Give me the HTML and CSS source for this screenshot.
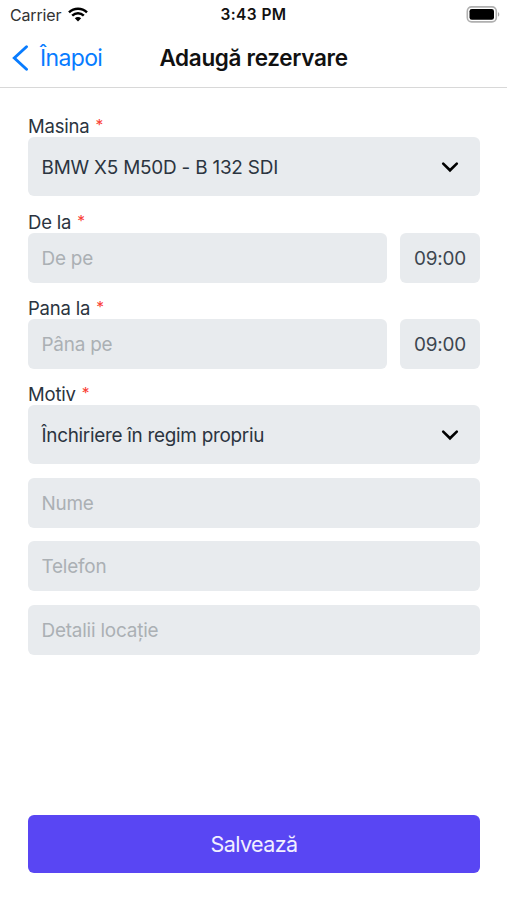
FILE: index.html
```html
<!DOCTYPE html>
<html lang="ro">
<head>
<meta charset="utf-8">
<title>Adaugă rezervare</title>
<link rel="stylesheet" href="styles.css">
</head>
<body>
<div class="screen">
  <header class="header">
    <div class="status">
      <div class="carrier"><span>Carrier</span>
        <svg class="wifi" width="20" height="15" viewBox="0 0 20 15"><g fill="none" stroke="#000" stroke-width="2.5"><path d="M1 5.3C6.2.4 13.800.4 19 5.300"/><path d="M4.200 8.700c3.400-3.200 8.200-3.200 11.600 0"/></g><path d="M6.800 11.200c1.900-1.700 4.500-1.700 6.400 0L10 14.500z"/></svg>
      </div>
      <span class="clock">3:43 PM</span>
      <svg class="battery" width="34" height="17" viewBox="0 0 34 17"><rect x="1.300" y=".9" width="29" height="15" rx="4.300" fill="#fff" stroke="#b0b0b0" stroke-width="1.600"/><rect x="3.500" y="3" width="24.500" height="10.800" rx="2.300"/><path d="M32 6.200c1.700.6 1.700 3.800 0 4.400z" fill="#aaa"/></svg>
    </div>
    <nav class="nav">
      <a class="back"><svg width="17" height="26" viewBox="0 0 17 26"><path d="M14.500 1.700L2.300 13l12.200 11.300" fill="none" stroke="#087cff" stroke-width="2.900" stroke-linecap="round" stroke-linejoin="miter"/></svg><span>Înapoi</span></a>
      <h1 class="title">Adaugă rezervare</h1>
    </nav>
  </header>
  <form class="form">
    <div class="group">
      <label class="label">Masina <i>*</i></label>
      <div class="field select"><span>BMW X5 M50D - B 132 SDI</span><svg width="18" height="12" viewBox="0 0 18 12"><path d="M2.200 2.600L9 9.300l6.800-6.700" fill="none" stroke="#000" stroke-width="2.600" stroke-linecap="round"/></svg></div>
    </div>
    <div class="group">
      <label class="label">De la <i>*</i></label>
      <div class="row"><input class="field" placeholder="De pe"><div class="field time">09:00</div></div>
    </div>
    <div class="group">
      <label class="label">Pana la <i>*</i></label>
      <div class="row"><input class="field" placeholder="Pâna pe"><div class="field time">09:00</div></div>
    </div>
    <div class="group">
      <label class="label">Motiv <i>*</i></label>
      <div class="field select"><span class="reason">Închiriere în regim propriu</span><svg width="18" height="12" viewBox="0 0 18 12"><path d="M2.200 2.600L9 9.300l6.800-6.700" fill="none" stroke="#000" stroke-width="2.600" stroke-linecap="round"/></svg></div>
    </div>
    <div class="extras">
      <input class="field" placeholder="Nume">
      <input class="field" placeholder="Telefon">
      <input class="field" placeholder="Detalii locație">
    </div>
    <button class="save" type="button">Salvează</button>
  </form>
</div>
</body>
</html>
```
FILE: styles.css
```css
* { box-sizing: border-box; }
body {
  margin: 0;
  background: #fff;
  font-family: Inter, "Liberation Sans", sans-serif;
  color: #2b3440;
}
.screen { height: 900px; display: flex; flex-direction: column; overflow: hidden; }
.header { height: 88px; border-bottom: 1.5px solid #d8d8d8; flex: none; }
.status {
  height: 29px;
  display: grid;
  grid-template-columns: 1fr auto 1fr;
  align-items: center;
  padding: 0 7px 0 10px;
  font-size: 16px;
}
.carrier { display: flex; align-items: center; gap: 7px; color: #333; letter-spacing: -.15px; }
.clock { font-weight: 600; color: #111; font-size: 15.5px; letter-spacing: .4px; margin-right: 3px; }
.battery { justify-self: end; }
.nav {
  height: 58px;
  display: grid;
  grid-template-columns: 1fr auto 1fr;
  align-items: center;
  padding: 0 12px;
}
.back { display: flex; align-items: center; gap: 11px; color: #087cff; font-size: 23px; letter-spacing: -.65px; }
.title { margin: 0; padding-bottom: 2px; font-size: 22.5px; font-weight: 600; color: #111; letter-spacing: -.32px; }
.form { flex: 1; display: flex; flex-direction: column; padding: 26.3px 27px 27px 28px; }
.group { margin-bottom: 13.35px; }
.label { display: block; height: 23px; line-height: 24px; font-size: 18.5px; letter-spacing: -.2px; }
.label i { margin-left: 1px; font-style: normal; font-size: 15.5px; line-height: 1; vertical-align: 2px; color: #fa3e35; }
.field {
  display: flex;
  align-items: center;
  width: 100%;
  min-width: 0;
  height: 50px;
  padding: 1px 13.5px 0;
  border: 0;
  border-radius: 6px;
  background: #e8ebee;
  color: #2b3440;
  font: 400 18.9px Inter, "Liberation Sans", sans-serif;
  letter-spacing: -.2px;
}
.field::placeholder { color: #abb0b4; opacity: 1; }
.select { height: 59px; justify-content: space-between; padding-right: 21.5px; }
.reason { letter-spacing: -.28px; }
.row { display: flex; gap: 13.5px; }
.time { width: 80px; flex: none; justify-content: center; padding: 1px 0 0; color: #3d4650; }
.extras { display: flex; flex-direction: column; gap: 13.6px; margin-top: .2px; }
.save {
  height: 58px;
  margin-top: auto;
  border: 0;
  border-radius: 6px;
  background: #5946f3;
  color: #f1efff;
  font: 400 21.5px Inter, "Liberation Sans", sans-serif;
  letter-spacing: -.55px;
}
```
